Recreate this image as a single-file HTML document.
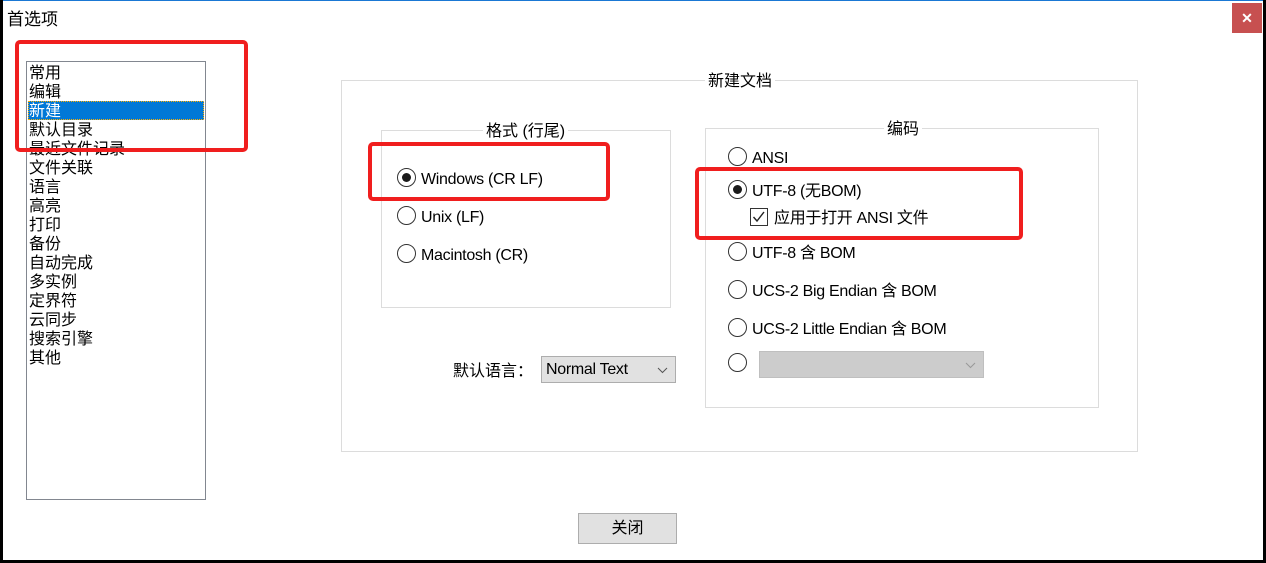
<!DOCTYPE html>
<html><head><meta charset="utf-8"><style>
*{margin:0;padding:0;box-sizing:border-box}
body{width:1266px;height:563px;position:relative;background:#fff;overflow:hidden;font-family:"Liberation Sans","Noto Sans CJK SC",sans-serif;font-size:16px;color:#000}
.a{position:absolute;white-space:nowrap}
.box{position:absolute;border:1px solid #dcdcdc}
.lg{position:absolute;background:#fff;padding:0 3px;line-height:18px}
.r{position:absolute;width:19px;height:19px;border:1px solid #333;border-radius:50%;background:#fff}
.r.on::after{content:"";position:absolute;left:4px;top:4px;width:9px;height:9px;border-radius:50%;background:#1a1a1a}
.lbl{position:absolute;line-height:20px;white-space:nowrap;font-size:16px;letter-spacing:-0.3px;margin-top:2px}
.red{position:absolute;border:4px solid #f01e1e;border-radius:5px}
.li{position:absolute;left:29px;line-height:19px;font-size:16px;margin-top:1px}
</style></head><body>
<div class="a" style="left:0;top:0;width:1266px;height:1px;background:#1a78d4"></div>
<div class="a" style="left:0;top:0;width:3px;height:563px;background:#000"></div>
<div class="a" style="left:1263px;top:0;width:3px;height:563px;background:#000"></div>
<div class="a" style="left:0;top:560px;width:1266px;height:3px;background:#000"></div>
<div class="a" style="left:7px;top:9px;font-size:17px;line-height:22px">首选项</div>
<div class="a" style="left:1232px;top:3px;width:30px;height:30px;background:#c75050;color:#fff;font-weight:bold;font-size:14px;text-align:center;line-height:30px">✕</div>

<div class="a" style="left:26px;top:61px;width:180px;height:439px;border:1px solid #828790"></div>
<div class="a" style="left:28px;top:101px;width:176px;height:19px;background:#0078d7;outline:1px dotted #ffb000;outline-offset:-1px"></div>
<div class="li" style="top:63px">常用</div>
<div class="li" style="top:82px">编辑</div>
<div class="li" style="top:101px;color:#fff">新建</div>
<div class="li" style="top:120px">默认目录</div>
<div class="li" style="top:139px">最近文件记录</div>
<div class="li" style="top:158px">文件关联</div>
<div class="li" style="top:177px">语言</div>
<div class="li" style="top:196px">高亮</div>
<div class="li" style="top:215px">打印</div>
<div class="li" style="top:234px">备份</div>
<div class="li" style="top:253px">自动完成</div>
<div class="li" style="top:272px">多实例</div>
<div class="li" style="top:291px">定界符</div>
<div class="li" style="top:310px">云同步</div>
<div class="li" style="top:329px">搜索引擎</div>
<div class="li" style="top:348px">其他</div>

<div class="box" style="left:341px;top:80px;width:797px;height:372px"></div>
<div class="lg" style="left:705px;top:73px">新建文档</div>
<div class="box" style="left:381px;top:130px;width:290px;height:178px"></div>
<div class="lg" style="left:483px;top:123px">格式 (行尾)</div>
<div class="box" style="left:705px;top:128px;width:394px;height:280px"></div>
<div class="lg" style="left:884px;top:121px">编码</div>

<div class="r on" style="left:397px;top:168px"></div><div class="lbl" style="left:421px;top:168px">Windows (CR LF)</div>
<div class="r" style="left:397px;top:206px"></div><div class="lbl" style="left:421px;top:206px">Unix (LF)</div>
<div class="r" style="left:397px;top:244px"></div><div class="lbl" style="left:421px;top:244px">Macintosh (CR)</div>

<div class="a" style="left:453px;top:362px;line-height:20px">默认语言：</div>
<div class="a" style="left:541px;top:356px;width:135px;height:27px;background:#e1e1e1;border:1px solid #adadad;line-height:26px;padding-left:4px;letter-spacing:-0.3px">Normal Text<svg style="position:absolute;right:7px;top:10px" width="11" height="7"><path d="M1 1l4.5 4.5L10 1" fill="none" stroke="#555" stroke-width="1"/></svg></div>

<div class="r" style="left:728px;top:147px"></div><div class="lbl" style="left:752px;top:147px">ANSI</div>
<div class="r on" style="left:728px;top:180px"></div><div class="lbl" style="left:752px;top:180px">UTF-8 (无BOM)</div>
<div class="a" style="left:750px;top:208px;width:18px;height:18px;border:1px solid #333;background:#fff"><svg width="16" height="16" style="position:absolute;left:0;top:0"><path d="M2.5 8l3.5 4L13 3" fill="none" stroke="#222" stroke-width="1.4"/></svg></div>
<div class="lbl" style="left:774px;top:207px">应用于打开 ANSI 文件</div>
<div class="r" style="left:728px;top:242px"></div><div class="lbl" style="left:752px;top:242px">UTF-8 含 BOM</div>
<div class="r" style="left:728px;top:280px"></div><div class="lbl" style="left:752px;top:280px">UCS-2 Big Endian 含 BOM</div>
<div class="r" style="left:728px;top:318px"></div><div class="lbl" style="left:752px;top:318px">UCS-2 Little Endian 含 BOM</div>
<div class="r" style="left:728px;top:353px"></div>
<div class="a" style="left:759px;top:351px;width:225px;height:27px;background:#cccccc;border:1px solid #bfbfbf"><svg style="position:absolute;right:7px;top:10px" width="11" height="7"><path d="M1 1l4.5 4.5L10 1" fill="none" stroke="#999" stroke-width="1"/></svg></div>

<div class="a" style="left:578px;top:513px;width:99px;height:31px;background:#e1e1e1;border:1px solid #adadad;text-align:center;line-height:30px">关闭</div>

<div class="red" style="left:15px;top:40px;width:233px;height:112px"></div>
<div class="red" style="left:368px;top:142px;width:242px;height:59px"></div>
<div class="red" style="left:695px;top:167px;width:328px;height:73px"></div>
</body></html>
